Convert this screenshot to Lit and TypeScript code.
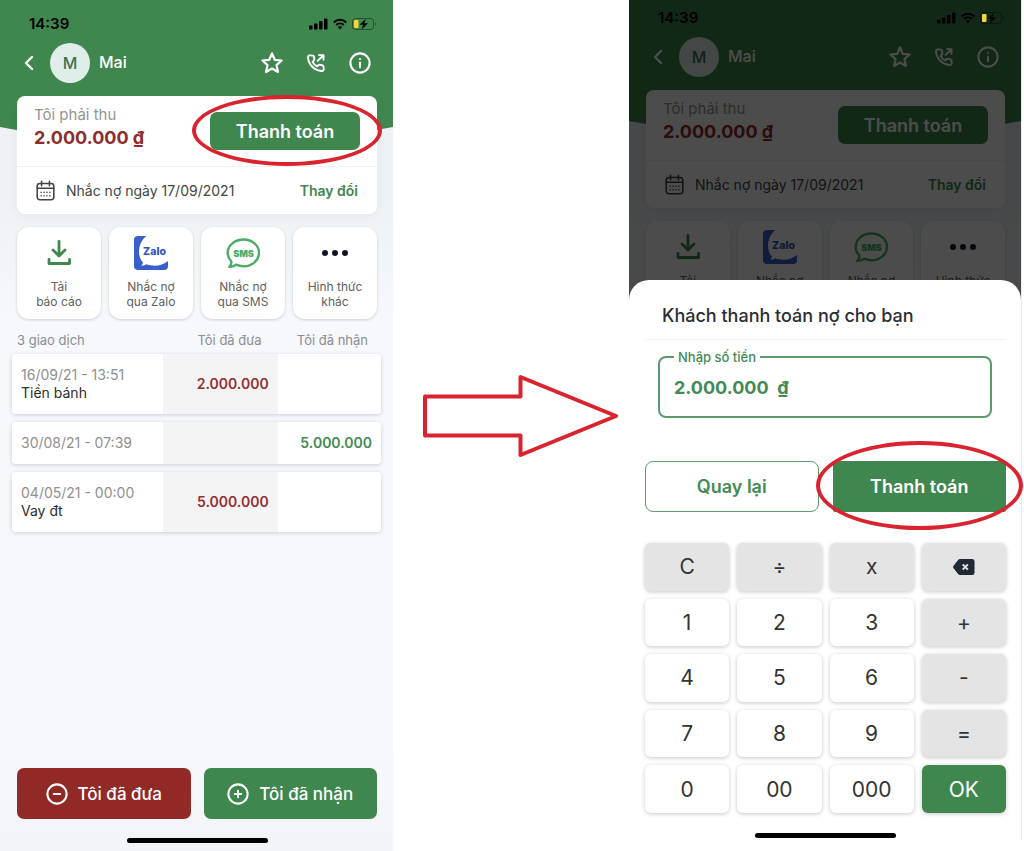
import { LitElement, html, css, svg, nothing } from "lit";
import { customElement, property } from "lit/decorators.js";

const shared = css`
  * {
    box-sizing: border-box;
  }
  button {
    font: inherit;
    color: inherit;
    border: 0;
    margin: 0;
    padding: 0;
    background: none;
    cursor: pointer;
  }
  svg {
    display: block;
    flex: none;
  }
  .home-bar {
    width: 141px;
    height: 5px;
    border-radius: 3px;
    background: #000;
    align-self: center;
  }
  .ring {
    position: absolute;
    border: 4px solid #d9232e;
    border-radius: 50%;
    pointer-events: none;
  }
  .ringed {
    position: relative;
    display: grid;
  }
`;

const line = (body: unknown, size = 24, width = 2) => html`<svg
  width=${size}
  height=${size}
  viewBox="0 0 24 24"
  fill="none"
  stroke="currentColor"
  stroke-width=${width}
  stroke-linecap="round"
  stroke-linejoin="round"
  aria-hidden="true"
>${body}</svg>`;

const icons = {
  back: html`<svg width="10" height="16" viewBox="0 0 10 16" fill="none" stroke="currentColor" stroke-width="2.4" stroke-linecap="round" stroke-linejoin="round" aria-hidden="true"><path d="M8 2 2 8l6 6" /></svg>`,
  star: line(svg`<path d="M12 1.500l3 7 7.500.8-5.600 5 1.600 7.500L12 18 5.500 21.800l1.600-7.500L1.500 9.300l7.500-.8z" />`, 22, 2.4),
  phone: line(svg`<path d="M8.200 3.200 5 2.800C3.400 2.700 2.200 3.900 2.400 5.500 3.300 14.300 9.700 20.700 18.500 21.600c1.600.2 2.900-1.100 2.800-2.600l-.3-2.600c-.1-.9-.7-1.500-1.600-1.700l-2.700-.6c-.7-.2-1.400.1-1.900.6l-1.400 1.400c-2.600-1.300-4.200-2.900-5.500-5.500l1.400-1.400c.5-.5.7-1.200.6-1.900l-.3-2.700c-.2-.8-.6-1.300-1.400-1.400z" /><path d="M14 9.500l6.500-6.500M15.500 2.500h5.500v5.500" />`, 20, 2.3),
  info: line(svg`<circle cx="12" cy="12" r="10.500" /><path d="M12 11.500v5M12 7.600v.1" />`, 22, 2.2),
  calendar: line(svg`<rect x="2.500" y="4" width="19" height="18.500" rx="3" /><path d="M2.500 9.500h19M7.500 1.500v5M16.500 1.500v5" /><path d="M7 14v.1M10.400 14v.1M13.700 14v.1M17 14v.1M7 18v.1M10.400 18v.1M13.700 18v.1M17 18v.1" />`, 21, 1.800),
  minus: line(svg`<circle cx="12" cy="12" r="10.500" /><path d="M8.500 12h7" />`, 22, 2.200),
  plus: line(svg`<circle cx="12" cy="12" r="10.500" /><path d="M8.500 12h7M12 8.500v7" />`, 22, 2.200),
  download: html`<svg width="34" height="34" viewBox="0 0 34 34" fill="none" stroke="#3f874f" stroke-width="2.800" stroke-linecap="round" stroke-linejoin="round" aria-hidden="true"><path d="M17 5.500v14M11 14l6 6 6-6" /><path d="M7 23.500v4h20.500v-4" /></svg>`,
  zalo: html`<svg width="34" height="34" viewBox="0 0 34 34" aria-hidden="true"><path d="M4 0h8.500C3.500 7 3 20.500 9 26.500c-.3 1.600-1 2.300-2 3 2.300.2 4-.4 5.500-1.200 8 2.900 16 1.200 21.500-3.300V30a4 4 0 0 1-4 4H4a4 4 0 0 1-4-4V4a4 4 0 0 1 4-4z" fill="#3a5fcb" /><text x="20.500" y="18.500" text-anchor="middle" font-family="Inter, sans-serif" font-weight="800" font-size="10.500" fill="#3355b8">Zalo</text></svg>`,
  sms: html`<svg width="34" height="34" viewBox="0 0 34 34" aria-hidden="true"><path d="M17.500 3.500C26 3.500 33 9.300 33 16.800S26 30.200 17.500 30.200c-2.700 0-5.200-.5-7.400-1.500-1.700 1.300-4 2.200-6.800 2.200 1.500-1.600 2.300-3.500 2-5.500C3 23.100 1.700 20.200 1.700 16.800 1.700 9.300 8.800 3.500 17.500 3.500z" fill="none" stroke="#4dad64" stroke-width="2.400" stroke-linejoin="round" /><text x="17.500" y="20.600" text-anchor="middle" font-family="Inter, sans-serif" font-weight="900" font-size="9" fill="#4dad64">SMS</text></svg>`,
  more: html`<svg width="34" height="34" viewBox="0 0 34 34" fill="#111722" aria-hidden="true"><circle cx="7" cy="17" r="3" /><circle cx="17" cy="17" r="3" /><circle cx="27" cy="17" r="3" /></svg>`,
  erase: html`<svg width="22" height="16" viewBox="0 0 22 16" aria-hidden="true"><path d="M7 0h12a2.500 2.500 0 0 1 2.500 2.500v11A2.500 2.500 0 0 1 19 16H7c-.8 0-1.400-.3-1.900-.9L.6 9.300a2 2 0 0 1 0-2.600L5.100.9C5.600.3 6.200 0 7 0z" fill="#212934" /><path d="M9.700 5.300l5.200 5.400M14.900 5.300l-5.200 5.400" stroke="#e4e4e4" stroke-width="1.900" /></svg>`,
  signals: html`<svg width="68" height="14" viewBox="0 0 68 14" aria-hidden="true"><rect x="0" y="8.500" width="3.500" height="4" rx=".8" /><rect x="5" y="6.500" width="3.500" height="6" rx=".8" /><rect x="10" y="4" width="3.500" height="8.500" rx=".8" /><rect x="15" y="1.500" width="3.500" height="11" rx=".8" /><path d="M24.800 5.400a8.600 8.600 0 0 1 12.400 0M27.200 8a5.500 5.500 0 0 1 7.600 0" fill="none" stroke="#000" stroke-width="2.100" /><path d="M28.800 10a3.200 3.200 0 0 1 4.400 0L31 12.500z" /><rect x="43.500" y="1.500" width="21" height="11" rx="3" fill="none" stroke="#000" stroke-opacity=".4" /><path d="M66 5.500v3c1-.3 1.300-.8 1.300-1.500s-.3-1.200-1.300-1.500z" fill-opacity=".4" /><rect x="45" y="3" width="4.500" height="8" rx="1" fill="#f3d53e" /><path d="M56.800 1.800l-6.300 6h3.600l-1.500 4.600 6.400-6.200h-3.700z" /></svg>`,
};

interface Entry {
  time: string;
  note?: string;
  given?: string;
  received?: string;
}

const entries: Entry[] = [
  { time: "16/09/21 - 13:51", note: "Tiền bánh", given: "2.000.000" },
  { time: "30/08/21 - 07:39", received: "5.000.000" },
  { time: "04/05/21 - 00:00", note: "Vay đt", given: "5.000.000" },
];

const actions = [
  { icon: icons.download, label: ["Tải", "báo cáo"] },
  { icon: icons.zalo, label: ["Nhắc nợ", "qua Zalo"] },
  { icon: icons.sms, label: ["Nhắc nợ", "qua SMS"] },
  { icon: icons.more, label: ["Hình thức", "khác"] },
];

/** Debt overview for one customer. With `dimmed` it is the backdrop of a sheet. */
@customElement("debt-screen")
class DebtScreen extends LitElement {
  @property({ type: Boolean, reflect: true }) dimmed = false;

  static styles = [
    shared,
    css`
      :host {
        display: flex;
        flex-direction: column;
        position: relative;
        min-height: 100%;
        overflow: hidden;
        isolation: isolate;
        background: linear-gradient(#eef2f4 0, #eef2f4 200px, #f6f8fc 320px, #f6f8fc 740px, #f2f4f7 100%);
      }
      .hill {
        position: absolute;
        z-index: -1;
        left: 0;
        top: 0;
        width: 100%;
        height: 150px;
      }
      :host([dimmed]) .hill {
        top: -6px;
      }
      .status {
        display: flex;
        justify-content: space-between;
        align-items: center;
        padding: 14px 16px 0 29px;
        font-size: 15px;
        line-height: 20px;
        font-weight: 600;
        color: #000;
      }
      :host([dimmed]) .status {
        position: relative;
        z-index: 3;
        padding-top: 8px;
      }
      .bar {
        display: flex;
        align-items: center;
        padding: 9px 22px 0 24px;
        color: #fff;
      }
      .avatar {
        width: 40px;
        height: 40px;
        margin: 0 9px 0 16px;
        border-radius: 50%;
        background: #e0eeea;
        color: #3f6f52;
        font-size: 16px;
        font-weight: 500;
        display: grid;
        place-items: center;
      }
      h1 {
        flex: 1;
        margin: 0;
        padding-bottom: 2px;
        font-size: 16px;
        line-height: 20px;
        font-weight: 500;
      }
      .tools {
        display: flex;
        align-items: center;
        gap: 23px;
      }
      .card {
        margin: 13px 16px 0 17px;
        border-radius: 8px;
        background: #fff;
        box-shadow: 0 2px 10px rgba(40, 60, 80, 0.06);
      }
      .due {
        display: flex;
        justify-content: space-between;
        align-items: center;
        height: 71px;
        padding: 0 17px;
        border-bottom: 1px solid #f0f1f3;
      }
      .due p {
        margin: 0;
        padding-bottom: 6px;
        font-size: 15px;
        line-height: 20px;
        color: #949494;
      }
      .due strong {
        display: block;
        font-size: 18px;
        line-height: 26px;
        font-weight: 700;
        color: #8e2c2c;
      }
      .pay {
        width: 150px;
        height: 38px;
        border-radius: 7px;
        background: #3f874f;
        color: #fff;
        font-size: 18px;
        font-weight: 600;
      }
      .ring {
        inset: -17px -22px -16px -18px;
      }
      .remind {
        display: flex;
        align-items: center;
        gap: 10px;
        height: 47px;
        padding: 0 19px 0 18px;
        color: #444;
        font-size: 14px;
      }
      .remind span {
        flex: 1;
      }
      .remind button {
        color: #3f874f;
        font-weight: 600;
      }
      .actions {
        display: grid;
        grid-template-columns: repeat(4, 1fr);
        gap: 8px;
        margin: 13px 16px 0 17px;
      }
      .tile {
        display: flex;
        flex-direction: column;
        align-items: center;
        gap: 9px;
        height: 92px;
        padding-top: 9px;
        border-radius: 12px;
        background: #fff;
        box-shadow: 0 1px 3px rgba(40, 50, 70, 0.2);
        color: #606060;
        font-size: 12px;
        line-height: 15px;
      }
      .tile span {
        display: block;
      }
      table {
        margin: 7px 12px 0;
        border-collapse: separate;
        border-spacing: 0 8px;
        table-layout: fixed;
        font-size: 14px;
        line-height: 18px;
      }
      th {
        padding: 0 13px 0 5px;
        line-height: 12px;
        font-size: 13px;
        font-weight: 400;
        color: #8b8d91;
        text-align: right;
      }
      th:first-child {
        text-align: left;
      }
      th:nth-child(2) {
        padding-right: 16px;
      }
      .c1 {
        width: 41%;
      }
      .c2 {
        width: 31%;
      }
      tbody tr {
        border-radius: 4px;
        box-shadow: 0 1px 4px rgba(30, 40, 60, 0.2);
      }
      td {
        height: 42px;
        padding: 0 9px;
        background: #fff;
        text-align: right;
        font-weight: 600;
      }
      tr.noted td {
        height: 60px;
      }
      td:first-child {
        text-align: left;
        border-radius: 4px 0 0 4px;
        font-weight: 400;
        color: #8f8f8f;
      }
      td:last-child {
        border-radius: 0 4px 4px 0;
        color: #438a55;
      }
      td.given {
        background: #f4f4f4;
        color: #933034;
      }
      .note {
        display: block;
        color: #2d2d2d;
      }
      .foot {
        margin-top: auto;
        padding: 0 16px 8px 17px;
        display: flex;
        flex-direction: column;
        gap: 19px;
      }
      .pair {
        display: grid;
        grid-template-columns: 1fr 1fr;
        gap: 13px;
      }
      .pair button {
        display: flex;
        align-items: center;
        justify-content: center;
        gap: 10px;
        height: 51px;
        border-radius: 7px;
        background: #3f874f;
        color: #fff;
        font-size: 17px;
        font-weight: 500;
      }
      .pair .give {
        background: #912a27;
      }
      .shade {
        position: absolute;
        inset: 0;
        z-index: 2;
        background: rgba(0, 0, 0, 0.7);
      }
    `,
  ];

  render() {
    const pay = html`<button class="pay">Thanh toán</button>`;
    return html`
      <svg class="hill" viewBox="0 0 393 150" preserveAspectRatio="none" aria-hidden="true">
        <path d="M0 0H393V127Q196.500 165 0 127Z" fill="#3f874f" />
      </svg>
      <div class="status"><span>14:39</span>${icons.signals}</div>
      <header class="bar">
        <button aria-label="Quay lại">${icons.back}</button>
        <span class="avatar">M</span>
        <h1>Mai</h1>
        <div class="tools">
          <button aria-label="Yêu thích">${icons.star}</button>
          <button aria-label="Gọi">${icons.phone}</button>
          <button aria-label="Thông tin">${icons.info}</button>
        </div>
      </header>
      <section class="card">
        <div class="due">
          <p>Tôi phải thu<strong>2.000.000 ₫</strong></p>
          <div class="ringed">${pay}${this.dimmed ? nothing : html`<span class="ring"></span>`}</div>
        </div>
        <div class="remind">
          ${icons.calendar}<span>Nhắc nợ ngày 17/09/2021</span><button>Thay đổi</button>
        </div>
      </section>
      <nav class="actions">
        ${actions.map(
          (a) => html`<button class="tile">
            ${a.icon}
            <div>${a.label.map((l) => html`<span>${l}</span>`)}</div>
          </button>`
        )}
      </nav>
      ${this.dimmed ? html`<div class="shade"></div>` : this.renderLedger()}
    `;
  }

  private renderLedger() {
    return html`
      <table>
        <thead>
          <tr>
            <th class="c1">3 giao dịch</th>
            <th class="c2">Tôi đã đưa</th>
            <th>Tôi đã nhận</th>
          </tr>
        </thead>
        <tbody>
          ${entries.map(
            (e) => html`<tr class=${e.note ? "noted" : "plain"}>
              <td>${e.time}${e.note ? html`<span class="note">${e.note}</span>` : nothing}</td>
              <td class="given">${e.given}</td>
              <td>${e.received}</td>
            </tr>`
          )}
        </tbody>
      </table>
      <footer class="foot">
        <div class="pair">
          <button class="give">${icons.minus}Tôi đã đưa</button>
          <button>${icons.plus}Tôi đã nhận</button>
        </div>
        <div class="home-bar"></div>
      </footer>
    `;
  }
}

const keys = ["C", "÷", "x", "erase", "1", "2", "3", "+", "4", "5", "6", "-", "7", "8", "9", "=", "0", "00", "000", "OK"];

/** Bottom sheet in which the paid amount is typed. */
@customElement("payment-sheet")
class PaymentSheet extends LitElement {
  static styles = [
    shared,
    css`
      :host {
        display: flex;
        flex-direction: column;
        padding: 0 15px 2px 16px;
        border-radius: 20px 20px 0 0;
        background: #fff;
      }
      h2 {
        margin: 0;
        padding: 24px 17px 11px;
        border-bottom: 1px solid #f2f2f2;
        font-size: 18px;
        line-height: 24px;
        font-weight: 500;
        color: #2b2d33;
      }
      fieldset {
        min-width: 0;
        margin: 9px 14px 0 13px;
        padding: 0 14px;
        height: 69px;
        border: 2px solid #5c9a6e;
        border-radius: 8px;
      }
      legend {
        padding: 0 4px;
        font-size: 13px;
        line-height: 16px;
        font-weight: 500;
        color: #438a55;
      }
      input {
        display: block;
        width: 100%;
        height: 44px;
        padding: 0;
        border: 0;
        outline: 0;
        background: none;
        font: inherit;
        font-size: 18px;
        font-weight: 700;
        color: #438a55;
      }
      .choices {
        display: grid;
        grid-template-columns: 1fr 1fr;
        gap: 14px;
        margin: 43px 0 31px;
      }
      .choices button {
        height: 51px;
        font-size: 18px;
        font-weight: 600;
      }
      .cancel {
        border: 1px solid #5f9a70;
        border-radius: 8px;
        color: #438a55;
      }
      .confirm {
        border-radius: 2px;
        background: #3f874f;
        color: #fff;
      }
      .ring {
        inset: -20px -17px -18px -17px;
      }
      .pad {
        flex: 1;
        display: grid;
        grid-template-columns: repeat(4, 1fr);
        grid-auto-rows: 1fr;
        gap: 8px;
        margin-bottom: 20px;
      }
      .pad button {
        display: grid;
        place-items: center;
        border-radius: 6px;
        background: #fff;
        box-shadow: 0 1px 4px rgba(0, 0, 0, 0.22);
        font-size: 21px;
        color: #333;
      }
      .pad .op {
        background: #e4e4e4;
      }
      .pad .ok {
        background: #3f874f;
        color: #fff;
      }
    `,
  ];

  private kind(key: string) {
    if (key === "OK") return "ok";
    return /^\d+$/.test(key) ? "digit" : "op";
  }

  render() {
    return html`
      <h2>Khách thanh toán nợ cho bạn</h2>
      <fieldset>
        <legend><label for="amount">Nhập số tiền</label></legend>
        <input id="amount" type="text" inputmode="numeric" .value=${"2.000.000  ₫"} />
      </fieldset>
      <div class="choices">
        <button class="cancel">Quay lại</button>
        <div class="ringed"><button class="confirm">Thanh toán</button><span class="ring"></span></div>
      </div>
      <div class="pad">
        ${keys.map((k) =>
          k === "erase"
            ? html`<button class="op" aria-label="Xóa">${icons.erase}</button>`
            : html`<button class=${this.kind(k)}>${k}</button>`
        )}
      </div>
      <div class="home-bar"></div>
    `;
  }
}

@customElement("app-root")
class AppRoot extends LitElement {
  static styles = [
    shared,
    css`
      :host {
        display: grid;
        grid-template-columns: 393fr 236fr 393fr;
        min-height: 100vh;
        padding-right: 2px;
        background: #fff;
        font-family: Inter, "Noto Sans", sans-serif;
      }
      .between {
        display: grid;
        place-items: center;
        padding: 0 0 20px 18px;
      }
      .phone {
        position: relative;
        margin-bottom: 11px;
        display: grid;
        border-right: 1px solid #ececec;
      }
      payment-sheet {
        position: absolute;
        z-index: 1;
        inset: 280px 0 0;
      }
    `,
  ];

  render() {
    return html`
      <debt-screen></debt-screen>
      <div class="between">
        <svg width="196" height="82" viewBox="0 0 196 82" fill="none" stroke="#d9232e" stroke-width="4" stroke-linejoin="round" aria-hidden="true">
          <path d="M3 21.500H98.500V2L194 41 98.500 80V60.500H3z" />
        </svg>
      </div>
      <div class="phone">
        <debt-screen dimmed inert></debt-screen>
        <payment-sheet></payment-sheet>
      </div>
    `;
  }
}
